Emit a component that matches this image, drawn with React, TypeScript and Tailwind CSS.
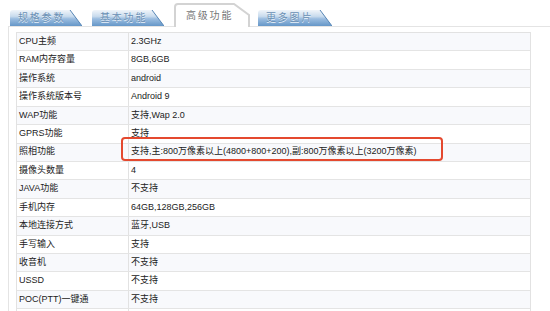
import React from 'react';

const rows: [string, string][] = [
  ['CPU主频', '2.3GHz'],
  ['RAM内存容量', '8GB,6GB'],
  ['操作系统', 'android'],
  ['操作系统版本号', 'Android 9'],
  ['WAP功能', '支持,Wap 2.0'],
  ['GPRS功能', '支持'],
  ['照相功能', '支持,主:800万像素以上(4800+800+200),副:800万像素以上(3200万像素)'],
  ['摄像头数量', '4'],
  ['JAVA功能', '不支持'],
  ['手机内存', '64GB,128GB,256GB'],
  ['本地连接方式', '蓝牙,USB'],
  ['手写输入', '支持'],
  ['收音机', '不支持'],
  ['USSD', '不支持'],
  ['POC(PTT)一键通', '不支持'],
  ['', '支持'],
];

const Tab: React.FC<{ label: string; width: number }> = ({ label, width }) => (
  <div className="relative h-[16px] flex items-center pl-[8px]" style={{ width }}>
    <svg className="absolute inset-0" width={width} height={16} viewBox={`0 0 ${width} 16`}>
      <defs>
        <linearGradient id={`g-${label}`} x1="0" y1="0" x2="0" y2="1">
          <stop offset="0" stopColor="#f1f5fa" />
          <stop offset="0.4" stopColor="#c8dbed" />
          <stop offset="0.55" stopColor="#9bbde0" />
          <stop offset="1" stopColor="#6597c8" />
        </linearGradient>
      </defs>
      <path d={`M0,16 V3 Q0,0 3,0 H${width - 12} L${width},16 Z`} fill={`url(#g-${label})`} />
      <path d={`M${width - 12},0 L${width},16`} stroke="#5585b5" strokeWidth="1" fill="none" />
    </svg>
    <span className="relative text-[10px] tracking-[1.8px] text-[#6a90b5] leading-none [text-shadow:0_1px_0_#e8f0f8]">
      {label}
    </span>
  </div>
);

export default function App() {
  return (
    <div className="relative w-[550px] h-[311px] overflow-hidden bg-white font-['Liberation_Sans','Noto_Sans_CJK_SC',sans-serif] text-[#222]">
      <div className="flex items-end h-[26px] pl-[10px]">
        <Tab label="规格参数" width={72} />
        <div className="w-[10px]" />
        <Tab label="基本功能" width={72} />
        <div className="w-[10px]" />
        <div className="relative w-[76px] h-[24px] -mb-[1px] flex items-center pl-[12px] pt-[2px]">
          <svg className="absolute inset-0" width="76" height="24" viewBox="0 0 76 24">
            <path d="M1,24 V4 Q1,1 4,1 H60 L75,12 V24" fill="#fff" stroke="#d3d3d3" strokeWidth="2" />
          </svg>
          <span className="relative text-[10px] tracking-[1.8px] text-[#777] leading-none">高级功能</span>
        </div>
        <div className="w-[8px]" />
        <Tab label="更多图片" width={74} />
      </div>
      <div className="ml-[8px] border-t border-l border-[#e4e4e4] pt-[5px] pl-[7px]">
        <div className="w-[515px] border-t border-l border-r border-[#e2e2e2] text-[9px]">
          {rows.map(([k, v], i) => (
            <div
              key={i}
              className={`flex h-[18.43px] border-b border-[#e4e4e4] ${i % 2 === 0 ? 'bg-[#f8f9fc]' : 'bg-white'}`}
            >
              <div className="w-[112px] shrink-0 border-r border-[#e2e2e2] pl-[2px] flex items-center whitespace-nowrap">
                {k}
              </div>
              <div className="pl-[2px] flex items-center whitespace-nowrap">{v}</div>
            </div>
          ))}
        </div>
      </div>
      <div className="absolute left-[121px] top-[137px] w-[322px] h-[24px] border-2 border-[#e4492f] rounded-[4px]" />
    </div>
  );
}
